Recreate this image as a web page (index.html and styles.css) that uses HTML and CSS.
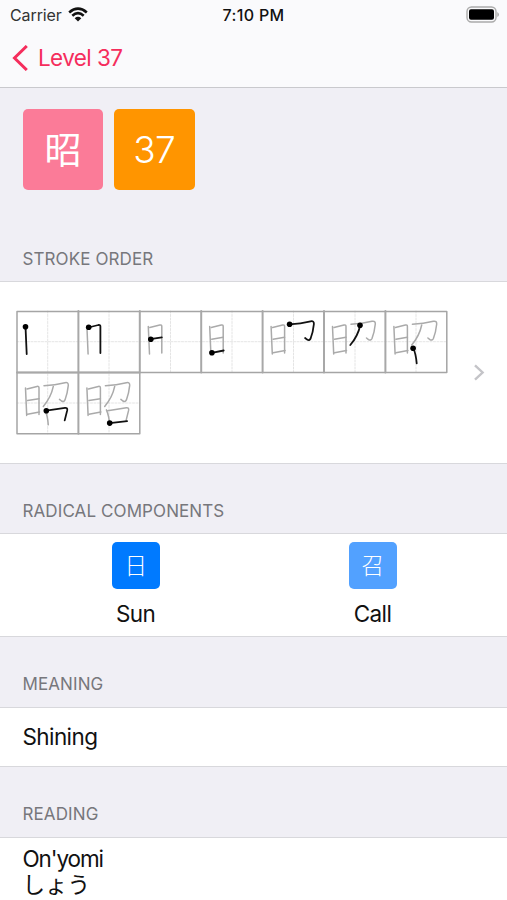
FILE: index.html
```
<!DOCTYPE html>
<html lang="en">
<head>
    <meta charset="UTF-8">
    <meta name="viewport" content="width=device-width, initial-scale=1.0">
    <title>Level 37</title>
    <link rel="stylesheet" href="styles.css">
</head>
<body>
    <header class="top">
        <div class="status-bar">
            <div class="carrier">
                <span>Carrier</span>
                <svg class="wifi" width="20" height="15" viewBox="0 0 20 15">
                    <path d="M1.2 5.4Q10 -2.2 18.8 5.4" />
                    <path d="M4.3 8.7Q10 3.6 15.7 8.7" />
                    <path class="fill" d="M6.7 11.2Q10 8.4 13.3 11.2L10 14.5z" />
                </svg>
            </div>
            <div class="time">7:10 PM</div>
            <svg class="battery" width="34" height="17" viewBox="0 0 34 17">
                <rect class="shell" x="1" y="1" width="29" height="15" rx="4.5" />
                <rect x="3" y="3.2" width="25" height="10.6" rx="2" />
                <path class="tip" d="M31.3 6v5Q33 10 33 8.500T31.3 6z" />
            </svg>
        </div>
        <nav class="nav">
            <svg class="back" width="17" height="26" viewBox="0 0 17 26">
                <path d="M14.800 1L2.500 13L14.800 25" />
            </svg>
            <span class="back-label">Level 37</span>
        </nav>
    </header>

    <div class="tiles">
        <div class="tile kanji" lang="ja">昭</div>
        <div class="tile level">37</div>
    </div>

    <h2 class="first">Stroke Order</h2>
    <section class="strokes">
        <svg class="diagram" width="432" height="125" viewBox="-1 -1 432 125">
            <defs>
                <path id="s1" d="M8.500 15.500L9.700 43" />
                <path id="s2" d="M10 16.500L20 14Q22 13.600 22 15.500V42" />
                <path id="s3" d="M10.500 28.200L22 26.300" />
                <path id="s4" d="M10.500 41.800L22.500 39.500" />
                <path id="s5" d="M27 13.300Q38 12.600 48 10.300Q51.500 9.600 51.300 13Q50.500 21 48 27.500Q46.800 30 44.500 28.600L42.500 27" />
                <path id="s6" d="M36.300 14Q34 25 26.300 34" />
                <path id="s7" d="M28 37.500Q30.500 43 31.300 52.300" />
                <path id="s8" d="M29.300 38.300L48 35.400Q50.800 35.200 50.200 38L47.700 48" />
                <path id="s9" d="M31.300 50.700L48.700 48.700" />
                <g id="p2"><use href="#s1" /></g>
                <g id="p3"><use href="#p2" /><use href="#s2" /></g>
                <g id="p4"><use href="#p3" /><use href="#s3" /></g>
                <g id="p5"><use href="#p4" /><use href="#s4" /></g>
                <g id="p6"><use href="#p5" /><use href="#s5" /></g>
                <g id="p7"><use href="#p6" /><use href="#s6" /></g>
                <g id="p8"><use href="#p7" /><use href="#s7" /></g>
                <g id="p9"><use href="#p8" /><use href="#s8" /></g>
            </defs>

            <path class="guide" d="M0 30.700H430M0 92H123M30.700 0V123M92 0V123M153.500 0V61M215 0V61M276.500 0V61M338 0V61M399 0V61" />
            <path class="edge" d="M0 .4H429.800V61.400H0zM0 61.400V122.800H122.800V61.400" />
            <path class="rule" d="M61.400 0V122.800M122.800 0V61.400M184.200 0V61.400M245.600 0V61.400M307 0V61.400M368.400 0V61.400M0 61.400H122.800" />

            <!-- finished strokes in grey, current stroke in black with a dot at its start -->
            <g>
                <use class="now" href="#s1" /><circle cx="8.500" cy="15.700" r="2.800" />
            </g>
            <g transform="translate(61.4 0)">
                <use class="done" href="#p2" />
                <use class="now" href="#s2" /><circle cx="10.300" cy="16.300" r="2.800" />
            </g>
            <g transform="translate(122.800 0)">
                <use class="done" href="#p3" />
                <use class="now" href="#s3" /><circle cx="11" cy="28.300" r="2.800" />
            </g>
            <g transform="translate(184.200 0)">
                <use class="done" href="#p4" />
                <use class="now" href="#s4" /><circle cx="10.700" cy="41.700" r="2.800" />
            </g>
            <g transform="translate(245.600 0)">
                <use class="done" href="#p5" />
                <use class="now" href="#s5" /><circle cx="27" cy="13.300" r="2.800" />
            </g>
            <g transform="translate(307 0)">
                <use class="done" href="#p6" />
                <use class="now" href="#s6" /><circle cx="36" cy="14.300" r="2.800" />
            </g>
            <g transform="translate(368.400 0)">
                <use class="done" href="#p7" />
                <use class="now" href="#s7" /><circle cx="27.700" cy="37.300" r="2.800" />
            </g>
            <g transform="translate(0 61.400)">
                <use class="done" href="#p8" />
                <use class="now" href="#s8" /><circle cx="29.300" cy="38.300" r="2.800" />
            </g>
            <g transform="translate(61.400 61.400)">
                <use class="done" href="#p9" />
                <use class="now" href="#s9" /><circle cx="31.300" cy="50.700" r="2.800" />
            </g>
        </svg>
        <svg class="chevron" width="12" height="18" viewBox="0 0 12 18">
            <path d="M2 1.300L9.600 8.500L2 15.700" />
        </svg>
    </section>

    <h2 class="components">Radical Components</h2>
    <section class="radicals">
        <div class="radical">
            <div class="mini sun" lang="ja">日</div>
            <span>Sun</span>
        </div>
        <div class="radical">
            <div class="mini call" lang="ja">召</div>
            <span>Call</span>
        </div>
    </section>

    <h2>Meaning</h2>
    <section class="meaning">Shining</section>

    <h2>Reading</h2>
    <section class="reading">
        <div class="type">On'yomi</div>
        <div class="kana" lang="ja">しょう</div>
    </section>
</body>
</html>
```
FILE: styles.css
```
* {
    box-sizing: border-box;
}

body {
    margin: 0;
    height: 900px;
    overflow: hidden;
    background-color: #f0eff5;
    color: #111;
    font-family: Inter, "Noto Sans CJK JP", sans-serif;
    font-size: 22.5px;
    letter-spacing: -0.6px;
}

svg {
    display: block;
    flex: none;
}

.top {
    height: 88px;
    background-color: #fafafc;
    border-bottom: 1px solid #c9c9cd;
}

.status-bar {
    display: grid;
    grid-template-columns: 1fr auto 1fr;
    align-items: center;
    height: 29px;
    padding: 0 7px 0 10px;
    font-size: 16px;
    letter-spacing: 0;
}

.carrier {
    display: flex;
    align-items: center;
    gap: 6px;
    color: #333;
    letter-spacing: -0.1px;
}

.wifi {
    fill: none;
    stroke: #111;
    stroke-width: 2.6;
}

.wifi .fill {
    fill: #111;
    stroke: none;
}

.time {
    padding-right: 3px;
    font-weight: 500;
    letter-spacing: 0.35px;
}

.battery {
    justify-self: end;
}

.battery .shell {
    fill: #fafafc;
    stroke: #aaa;
    stroke-width: 1.4;
}

.battery .tip {
    fill: #aaa;
}

.nav {
    display: flex;
    align-items: center;
    gap: 9px;
    height: 57px;
    padding-left: 12px;
    color: #f52d5c;
}

.back {
    fill: none;
    stroke: #f52d5c;
    stroke-width: 3;
}

.tiles {
    display: flex;
    gap: 11px;
    height: 147px;
    padding: 21px 22.5px 0;
}

.tile {
    display: flex;
    align-items: center;
    justify-content: center;
    width: 80.5px;
    height: 80.5px;
    border-radius: 5px;
    color: #fff;
    font-size: 37px;
}

.kanji {
    padding-bottom: 2px;
    background-color: #fb7b98;
    font-family: "Noto Sans CJK JP", sans-serif;
}

.level {
    background-color: #ff9500;
    font-weight: 300;
}

h2 {
    display: flex;
    align-items: flex-end;
    height: 70px;
    margin: 0;
    padding: 0 22.5px 13px;
    color: #77777c;
    font-size: 17px;
    font-weight: 400;
    line-height: 20px;
    letter-spacing: 0.1px;
    text-transform: uppercase;
}

.first {
    height: 46px;
    padding-bottom: 12px;
}

.components {
    height: 69px;
    padding-bottom: 12px;
}

section {
    background-color: #fff;
    border-top: 1px solid #d8d8dc;
    border-bottom: 1px solid #d8d8dc;
}

.strokes {
    display: flex;
    align-items: center;
    justify-content: space-between;
    height: 183px;
    padding: 0 22px 0 16px;
}

.diagram {
    fill: none;
    stroke-linecap: round;
    stroke-linejoin: round;
}

.guide {
    stroke: #ddd;
    stroke-dasharray: 2 1.500;
    stroke-width: 0.8;
}

.edge {
    stroke: #a5a5a5;
    stroke-width: 1.5;
}

.rule {
    stroke: #a8a8a8;
    stroke-width: 2;
}

.done {
    stroke: #aaa;
    stroke-width: 1.5;
}

.now {
    stroke: #111;
    stroke-width: 1.8;
}

.diagram circle {
    fill: #000;
}

.chevron {
    fill: none;
    stroke: #c4c4c8;
    stroke-width: 2.4;
}

.radicals {
    display: grid;
    grid-template-columns: 237px 237px;
    justify-content: center;
    height: 104px;
    padding: 8px 0 0 1px;
}

.radical {
    display: flex;
    flex-direction: column;
    align-items: center;
    gap: 11px;
    line-height: 27px;
}

.mini {
    display: flex;
    align-items: center;
    justify-content: center;
    width: 48px;
    height: 47px;
    padding-bottom: 2px;
    border-radius: 5px;
    color: #fff;
    font-family: "Noto Sans CJK JP", sans-serif;
    font-weight: 300;
    font-size: 22.5px;
}

.sun {
    background-color: #007aff;
}

.call {
    background-color: #52a1ff;
}

.meaning {
    height: 60px;
    padding-left: 22.5px;
    line-height: 58px;
}

.reading {
    height: 80px;
    padding: 7px 22.5px;
    line-height: 27px;
}

.type {
    letter-spacing: -1.1px;
}

.kana {
    letter-spacing: 0;
    line-height: 25px;
}
```
